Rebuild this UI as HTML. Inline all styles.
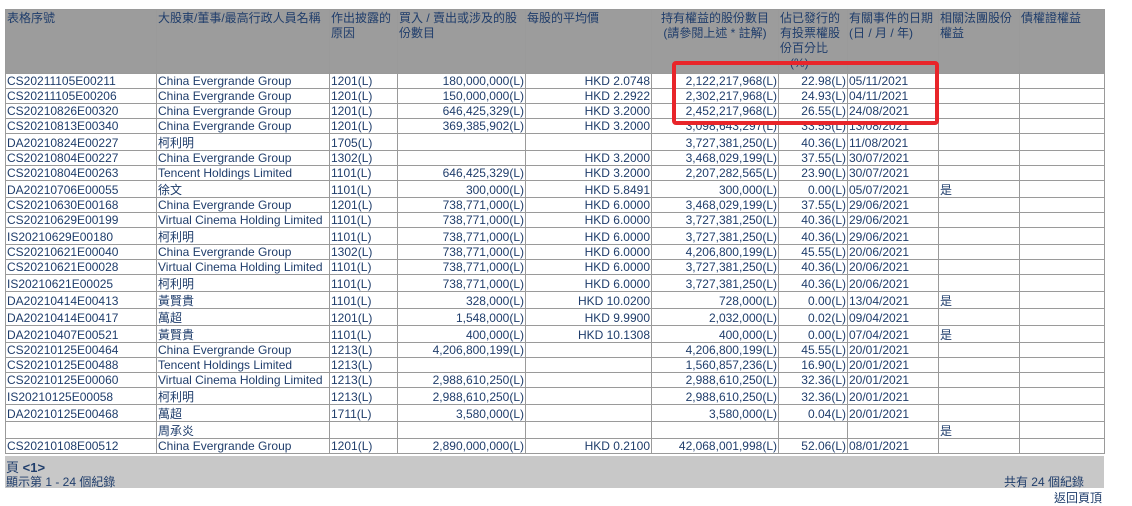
<!DOCTYPE html>
<html><head><meta charset="utf-8"><style>
body{margin:0;background:#fff;width:1132px;height:505px;overflow:hidden;position:relative;font-family:"Liberation Sans","Noto Sans CJK TC",sans-serif;font-size:12px;color:#1f3d6b}
table{position:absolute;left:5px;top:9px;border-collapse:collapse;table-layout:fixed;width:1099px}
td{border:1px solid #9a9a9a;padding:0 1px;height:14px;line-height:14px;white-space:nowrap;overflow:hidden;vertical-align:top}
td div{height:14px;line-height:14px;overflow:hidden}
tr.c td{height:16px;line-height:16px}
tr.c td div{height:16px;line-height:18px;overflow:visible}
tr.h td{background:#9c9c9c;height:62px;line-height:15px;white-space:normal;vertical-align:top;padding-top:1px}
td.r{text-align:right}
.foot{position:absolute;left:5px;top:456px;width:1099px;height:32px;background:#c8c8c8}
.box{position:absolute;left:672px;top:61px;width:259px;height:56px;border:4px solid #e8252a;border-radius:4px}
</style></head><body>
<table>
<colgroup><col style="width:151px"><col style="width:173px"><col style="width:68px"><col style="width:128px"><col style="width:126px"><col style="width:127px"><col style="width:69px"><col style="width:91px"><col style="width:81px"><col style="width:85px"></colgroup>
<tr class="h"><td>表格序號</td><td>大股東/董事/最高行政人員名稱</td><td>作出披露的原因</td><td>買入 / 賣出或涉及的股份數目</td><td>每股的平均價</td><td style="text-align:center">持有權益的股份數目<br>(請參閱上述 * 註解)</td><td>佔已發行的有投票權股份百分比<br><span style="padding-left:10px">(%)</span></td><td>有關事件的日期<br>(日 / 月 / 年)</td><td>相關法團股份權益</td><td>債權證權益</td></tr>
<tr><td>CS20211105E00211</td><td>China Evergrande Group</td><td>1201(L)</td><td class="r">180,000,000(L)</td><td class="r">HKD 2.0748</td><td class="r">2,122,217,968(L)</td><td class="r">22.98(L)</td><td>05/11/2021</td><td></td><td></td></tr>
<tr><td>CS20211105E00206</td><td>China Evergrande Group</td><td>1201(L)</td><td class="r">150,000,000(L)</td><td class="r">HKD 2.2922</td><td class="r">2,302,217,968(L)</td><td class="r">24.93(L)</td><td>04/11/2021</td><td></td><td></td></tr>
<tr><td>CS20210826E00320</td><td>China Evergrande Group</td><td>1201(L)</td><td class="r">646,425,329(L)</td><td class="r">HKD 3.2000</td><td class="r">2,452,217,968(L)</td><td class="r">26.55(L)</td><td>24/08/2021</td><td></td><td></td></tr>
<tr><td>CS20210813E00340</td><td>China Evergrande Group</td><td>1201(L)</td><td class="r">369,385,902(L)</td><td class="r">HKD 3.2000</td><td class="r">3,098,643,297(L)</td><td class="r">33.55(L)</td><td>13/08/2021</td><td></td><td></td></tr>
<tr class="c"><td><div>DA20210824E00227</div></td><td><div>柯利明</div></td><td><div>1705(L)</div></td><td></td><td></td><td class="r"><div>3,727,381,250(L)</div></td><td class="r"><div>40.36(L)</div></td><td><div>11/08/2021</div></td><td></td><td></td></tr>
<tr><td>CS20210804E00227</td><td>China Evergrande Group</td><td>1302(L)</td><td></td><td class="r">HKD 3.2000</td><td class="r">3,468,029,199(L)</td><td class="r">37.55(L)</td><td>30/07/2021</td><td></td><td></td></tr>
<tr><td>CS20210804E00263</td><td>Tencent Holdings Limited</td><td>1101(L)</td><td class="r">646,425,329(L)</td><td class="r">HKD 3.2000</td><td class="r">2,207,282,565(L)</td><td class="r">23.90(L)</td><td>30/07/2021</td><td></td><td></td></tr>
<tr class="c"><td><div>DA20210706E00055</div></td><td><div>徐文</div></td><td><div>1101(L)</div></td><td class="r"><div>300,000(L)</div></td><td class="r"><div>HKD 5.8491</div></td><td class="r"><div>300,000(L)</div></td><td class="r"><div>0.00(L)</div></td><td><div>05/07/2021</div></td><td><div>是</div></td><td></td></tr>
<tr><td>CS20210630E00168</td><td>China Evergrande Group</td><td>1201(L)</td><td class="r">738,771,000(L)</td><td class="r">HKD 6.0000</td><td class="r">3,468,029,199(L)</td><td class="r">37.55(L)</td><td>29/06/2021</td><td></td><td></td></tr>
<tr><td>CS20210629E00199</td><td>Virtual Cinema Holding Limited</td><td>1101(L)</td><td class="r">738,771,000(L)</td><td class="r">HKD 6.0000</td><td class="r">3,727,381,250(L)</td><td class="r">40.36(L)</td><td>29/06/2021</td><td></td><td></td></tr>
<tr class="c"><td><div>IS20210629E00180</div></td><td><div>柯利明</div></td><td><div>1101(L)</div></td><td class="r"><div>738,771,000(L)</div></td><td class="r"><div>HKD 6.0000</div></td><td class="r"><div>3,727,381,250(L)</div></td><td class="r"><div>40.36(L)</div></td><td><div>29/06/2021</div></td><td></td><td></td></tr>
<tr><td>CS20210621E00040</td><td>China Evergrande Group</td><td>1302(L)</td><td class="r">738,771,000(L)</td><td class="r">HKD 6.0000</td><td class="r">4,206,800,199(L)</td><td class="r">45.55(L)</td><td>20/06/2021</td><td></td><td></td></tr>
<tr><td>CS20210621E00028</td><td>Virtual Cinema Holding Limited</td><td>1101(L)</td><td class="r">738,771,000(L)</td><td class="r">HKD 6.0000</td><td class="r">3,727,381,250(L)</td><td class="r">40.36(L)</td><td>20/06/2021</td><td></td><td></td></tr>
<tr class="c"><td><div>IS20210621E00025</div></td><td><div>柯利明</div></td><td><div>1101(L)</div></td><td class="r"><div>738,771,000(L)</div></td><td class="r"><div>HKD 6.0000</div></td><td class="r"><div>3,727,381,250(L)</div></td><td class="r"><div>40.36(L)</div></td><td><div>20/06/2021</div></td><td></td><td></td></tr>
<tr class="c"><td><div>DA20210414E00413</div></td><td><div>黃賢貴</div></td><td><div>1101(L)</div></td><td class="r"><div>328,000(L)</div></td><td class="r"><div>HKD 10.0200</div></td><td class="r"><div>728,000(L)</div></td><td class="r"><div>0.00(L)</div></td><td><div>13/04/2021</div></td><td><div>是</div></td><td></td></tr>
<tr class="c"><td><div>DA20210414E00417</div></td><td><div>萬超</div></td><td><div>1201(L)</div></td><td class="r"><div>1,548,000(L)</div></td><td class="r"><div>HKD 9.9900</div></td><td class="r"><div>2,032,000(L)</div></td><td class="r"><div>0.02(L)</div></td><td><div>09/04/2021</div></td><td></td><td></td></tr>
<tr class="c"><td><div>DA20210407E00521</div></td><td><div>黃賢貴</div></td><td><div>1101(L)</div></td><td class="r"><div>400,000(L)</div></td><td class="r"><div>HKD 10.1308</div></td><td class="r"><div>400,000(L)</div></td><td class="r"><div>0.00(L)</div></td><td><div>07/04/2021</div></td><td><div>是</div></td><td></td></tr>
<tr><td>CS20210125E00464</td><td>China Evergrande Group</td><td>1213(L)</td><td class="r">4,206,800,199(L)</td><td></td><td class="r">4,206,800,199(L)</td><td class="r">45.55(L)</td><td>20/01/2021</td><td></td><td></td></tr>
<tr><td>CS20210125E00488</td><td>Tencent Holdings Limited</td><td>1213(L)</td><td></td><td></td><td class="r">1,560,857,236(L)</td><td class="r">16.90(L)</td><td>20/01/2021</td><td></td><td></td></tr>
<tr><td>CS20210125E00060</td><td>Virtual Cinema Holding Limited</td><td>1213(L)</td><td class="r">2,988,610,250(L)</td><td></td><td class="r">2,988,610,250(L)</td><td class="r">32.36(L)</td><td>20/01/2021</td><td></td><td></td></tr>
<tr class="c"><td><div>IS20210125E00058</div></td><td><div>柯利明</div></td><td><div>1213(L)</div></td><td class="r"><div>2,988,610,250(L)</div></td><td></td><td class="r"><div>2,988,610,250(L)</div></td><td class="r"><div>32.36(L)</div></td><td><div>20/01/2021</div></td><td></td><td></td></tr>
<tr class="c"><td><div>DA20210125E00468</div></td><td><div>萬超</div></td><td><div>1711(L)</div></td><td class="r"><div>3,580,000(L)</div></td><td></td><td class="r"><div>3,580,000(L)</div></td><td class="r"><div>0.04(L)</div></td><td><div>20/01/2021</div></td><td></td><td></td></tr>
<tr class="c"><td></td><td><div>周承炎</div></td><td></td><td></td><td></td><td></td><td></td><td></td><td><div>是</div></td><td></td></tr>
<tr><td>CS20210108E00512</td><td>China Evergrande Group</td><td>1201(L)</td><td class="r">2,890,000,000(L)</td><td class="r">HKD 0.2100</td><td class="r">42,068,001,998(L)</td><td class="r">52.06(L)</td><td>08/01/2021</td><td></td><td></td></tr>
</table>
<div class="foot">
<div style="position:absolute;left:1px;top:1px;font-size:13px">頁 <b>&lt;1&gt;</b></div>
<div style="position:absolute;left:1px;top:17px">顯示第 1 - 24 個紀錄</div>
<div style="position:absolute;right:20px;top:17px">共有 24 個紀錄</div>
</div>
<div style="position:absolute;left:1054px;top:489px">返回頁頂</div>
<div class="box"></div>
</body></html>
